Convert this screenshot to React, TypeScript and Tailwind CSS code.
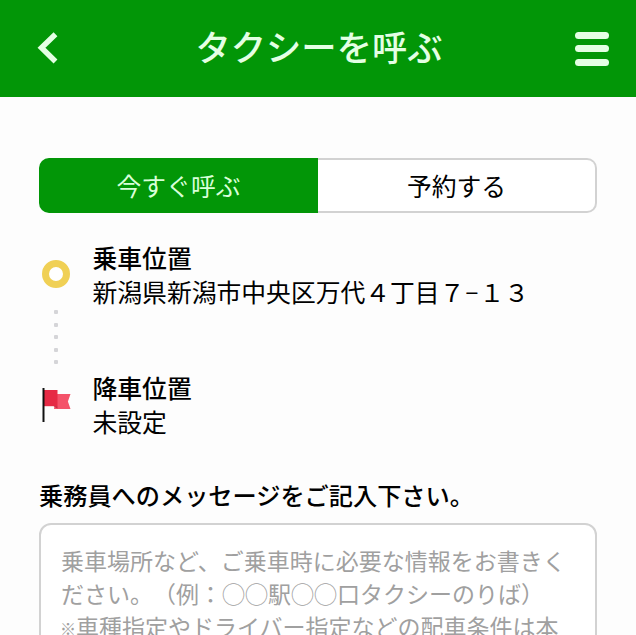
function BackIcon() {
  return (
    <svg width="24" height="36" viewBox="0 0 24 36" fill="none">
      <path d="M21.500 3.300 7.500 16.800 21.500 30.500" stroke="#e4ffe4" strokeWidth="5.500" />
    </svg>
  );
}

function FlagIcon() {
  return (
    <svg width="30" height="35" viewBox="0 0 30 35">
      <path d="M14 6h14.500l-2.600 7.500 2.600 7.500H12z" fill="#f4536a" />
      <path d="M2 2h13.500v16.200H2z" fill="#e62a45" />
      <path d="M11.500 18.200h4v2.300z" fill="#c02a40" />
      <path d="M0.500 0h2v34h-2z" fill="#111" />
    </svg>
  );
}

function Place({ title, value }: { title: string; value: React.ReactNode }) {
  return (
    <div className="h-[129.5px] whitespace-nowrap text-[24.8px] leading-[34px] text-black">
      <h2 className="font-medium">{title}</h2>
      <p>{value}</p>
    </div>
  );
}

export default function App() {
  return (
    <div
      lang="ja"
      className="h-[635px] w-[636px] overflow-hidden bg-[#fdfdfd] font-['Noto_Sans_CJK_JP',sans-serif] [text-spacing-trim:space-all]"
    >
      <header className="flex h-[97px] items-center justify-between bg-[#029607] pr-[27px] pl-[34px]">
        <button aria-label="戻る">
          <BackIcon />
        </button>
        <h1 className="mb-[6px] ml-[5px] text-[35.3px] leading-[50px] font-medium text-[#e4ffe4]">タクシーを呼ぶ</h1>
        <button aria-label="メニュー" className="flex w-[34px] flex-col gap-[6.5px]">
          <span className="h-[7px] rounded-full bg-[#e4ffe4]" />
          <span className="h-[7px] rounded-full bg-[#e4ffe4]" />
          <span className="h-[7px] rounded-full bg-[#e4ffe4]" />
        </button>
      </header>
      <main className="px-[39px] pt-[61px]">
        <div className="flex h-[55px] text-[24.8px]">
          <button className="w-[279px] rounded-l-[10px] bg-[#029607] text-[#d9ffd9]">今すぐ呼ぶ</button>
          <button className="flex-1 rounded-r-[10px] border-2 border-l-0 border-[#d2d2d2] bg-white text-black">
            予約する
          </button>
        </div>
        <section className="mt-[27px] flex h-[258px]">
          <div className="flex w-[53.5px] shrink-0 flex-col items-start pt-[20px] pl-[3px]">
            <span className="size-[28px] rounded-full border-[7px] border-[#f0d055] bg-white" />
            <div className="mt-[22px] ml-[12px] flex flex-col gap-[8.5px]">
              {[0, 1, 2, 3, 4].map((dot) => (
                <span key={dot} className="size-[4px] rounded-[1px] bg-[#d5d5d8]" />
              ))}
            </div>
            <div className="mt-[23.5px]">
              <FlagIcon />
            </div>
          </div>
          <div>
            <Place
              title="乗車位置"
              value={
                <>
                  新潟県新潟市中央区万代４丁目７
                  <span className="inline-block w-[15px] -translate-y-[2px] text-center">–</span>
                  １３
                </>
              }
            />
            <Place title="降車位置" value="未設定" />
          </div>
        </section>
        <h2 className="mt-[-20px] h-[45px] text-[24.2px] leading-[34px] font-medium whitespace-nowrap text-black">
          乗務員へのメッセージをご記入下さい。
        </h2>
        <div className="h-[200px] rounded-[12px] border-2 border-[#d2d2d2] bg-white pt-[19px] pl-[20px] text-[23px] leading-[33px] font-normal whitespace-nowrap text-[#a0a0a0]">
          <p>乗車場所など、ご乗車時に必要な情報をお書きく</p>
          <p>ださい。（例：◯◯駅◯◯口タクシーのりば）</p>
          <p>
            <span className="-ml-[1px] inline-block w-[16px] -translate-y-px text-[16px] font-medium">※</span>
            車種指定やドライバー指定などの配車条件は本
          </p>
        </div>
      </main>
    </div>
  );
}
